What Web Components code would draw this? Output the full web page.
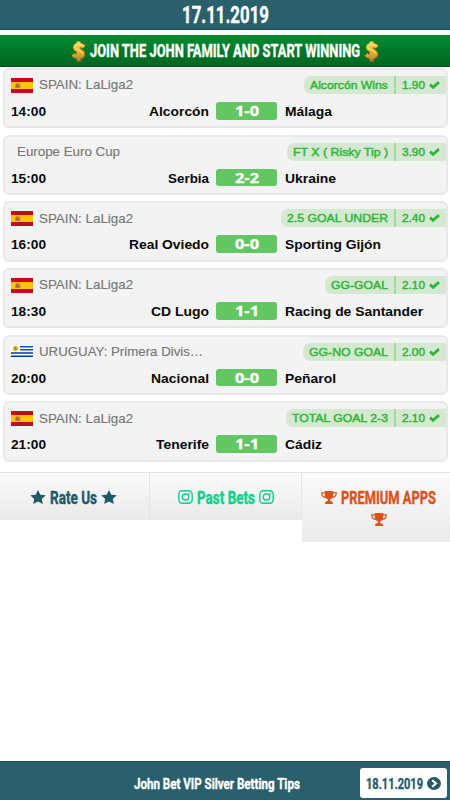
<!DOCTYPE html>
<html lang="en">
<head>
<meta charset="utf-8">
<meta name="viewport" content="width=device-width, initial-scale=1">
<title>John Bet VIP Silver Betting Tips</title>
<style>
    html, body {
        margin: 0;
        height: 100%;
        overflow: hidden;
        background: #fff;
    }
</style>
</head>
<body>
<betting-app></betting-app>
<script>
// Line of text squeezed or stretched to a width; its box is as tall as the capitals
class FitText extends HTMLElement {
    constructor() {
        super();
        this.attachShadow({ mode: 'open' });
    }

    connectedCallback() {
        const width = this.getAttribute('width');
        const cap = this.getAttribute('cap');
        this.shadowRoot.innerHTML = `
            <style>
                :host { display: block; flex: none; }
                svg { display: block; overflow: visible; }
                text { fill: currentColor; stroke: currentColor; stroke-width: var(--stroke, 0); }
            </style>
            <svg width="${width}" height="${cap}">
                <text x="0" y="${cap}" font-size="${cap / 0.716}">${this.textContent}</text>
            </svg>
        `;
        const text = this.shadowRoot.querySelector('text');
        const natural = text.getComputedTextLength();
        if (natural) text.setAttribute('transform', `scale(${width / natural} 1)`);
    }
}

const ICONS = {
    star: ['0 0 16 14', '<path fill="currentColor" d="M8 0l2.300 4.700 5.500.6-4 3.600 1 5.100L8 11.500 3.200 14l1-5.100-4-3.600 5.500-.6z"/>'],
    instagram: ['0 0 15 14', '<g fill="none" stroke="currentColor" stroke-width="1.4"><rect x=".8" y=".8" width="13.4" height="12.4" rx="3.6"/><ellipse cx="7.5" cy="7" rx="3.3" ry="3"/></g><circle cx="11.4" cy="3.6" r=".9" fill="currentColor"/>'],
    trophy: ['0 0 16 13', '<path fill="currentColor" d="M3.700 0h8.600v3.500c0 2.500-1.300 4.300-3.300 5 0 1.300.4 1.800 1.800 2 .9.200 1.200.8 1.200 2.500H4c0-1.700.3-2.300 1.200-2.500 1.400-.2 1.800-.7 1.800-2-2-.7-3.300-2.500-3.300-5z"/><path fill="none" stroke="currentColor" stroke-width="1.200" d="M4 1.900H.7c0 2.500 1.600 4.300 4.600 4.500M12 1.900h3.300c0 2.500-1.600 4.300-4.600 4.500"/>'],
    check: ['0 0 11 8', '<path fill="none" stroke="currentColor" stroke-width="2.8" d="M1 3.600l3.100 2.700L10 1.100"/>'],
    next: ['0 0 14 13', '<ellipse cx="7" cy="6.5" rx="7" ry="6.5" fill="currentColor"/><path fill="none" stroke="#fff" stroke-width="2.2" d="M5.200 3.200l3.700 3.300-3.700 3.300"/>'],
    spain: ['0 0 22 15', '<path fill="#c60b1e" d="M0 0h22v15H0z"/><path fill="#ffc400" d="M0 4h22v7H0z"/><path fill="#c98a2c" d="M4.500 6l1-.8h2l1.500.8.8 3-1 1h-4l-1-1z"/><path fill="#a34a2c" d="M5.500 6.500H8v2.700H5.500z"/><path fill="#d9b08a" d="M6.500 7h1v1h-1z"/>'],
    uruguay: ['0 0 22 13', '<path fill="#fff" d="M0 0h22v13H0z"/><path fill="#1450b4" d="M9 1h13v1.600H9zM9 4h13v1.600H9z"/><path fill="#0038a8" d="M0 7.200h22v1.600H0zM0 10.400h22V12H0z"/><circle cx="4.500" cy="3.500" r="2.800" fill="#ebc13c"/><circle cx="4.500" cy="3.500" r="1.500" fill="#a8852a"/>']
};

class UiIcon extends HTMLElement {
    constructor() {
        super();
        this.attachShadow({ mode: 'open' });
    }

    connectedCallback() {
        const [viewBox, shape] = ICONS[this.getAttribute('name')];
        const [, , width, height] = viewBox.split(' ');
        this.shadowRoot.innerHTML = `
            <style>
                :host { display: block; flex: none; }
                svg { display: block; }
            </style>
            <svg width="${width}" height="${height}" viewBox="${viewBox}">${shape}</svg>
        `;
    }
}

class DollarSign extends HTMLElement {
    constructor() {
        super();
        this.attachShadow({ mode: 'open' });
        this.shadowRoot.innerHTML = `
            <style>
                :host { display: block; flex: none; padding-top: 2px; }
                svg { display: block; }
            </style>
            <svg width="15" height="23" viewBox="0 0 15 23">
                <defs>
                    <linearGradient id="gold" x1="0" y1="0" x2="0" y2="1">
                        <stop offset="0" stop-color="#f8d65a"/>
                        <stop offset=".6" stop-color="#e6b02b"/>
                        <stop offset="1" stop-color="#a8873a"/>
                    </linearGradient>
                </defs>
                <g fill="none">
                    <path stroke="#8a6418" stroke-width="4.600" d="M13.300 7.500C11 4.500 5 4.500 4.700 7.800c-.2 3.700 7.600 2.700 7.600 6.500 0 3.700-7 3.700-9.800.7M8 2.500v19.500"/>
                    <path stroke="url(#gold)" stroke-width="3.800" d="M12.800 7C10.500 4 4.300 4 4 7.300c-.2 3.700 7.600 2.700 7.600 6.500 0 3.700-7 3.700-9.800.7M7.500 1.500V20.500"/>
                    <path stroke="#ffeb9c" stroke-width="1" d="M11 5.500C7.500 4 4 4.500 3.800 7c-.1 3 7.500 3 7.500 6.500"/>
                </g>
            </svg>
        `;
    }
}

class MatchCard extends HTMLElement {
    constructor() {
        super();
        this.attachShadow({ mode: 'open' });
    }

    connectedCallback() {
        const m = this.match;
        this.shadowRoot.innerHTML = `
            <style>
                :host {
                    display: block;
                    box-sizing: border-box;
                    height: 60.2px;
                    border: 2px solid #e8e8ea;
                    border-radius: 6px;
                    background: #f3f3f3;
                    font-family: "Liberation Sans", Arial, sans-serif;
                    font-weight: normal;
                }
                .row {
                    display: flex;
                    align-items: center;
                }
                .top {
                    height: 18px;
                    padding: 6px 0 0 6px;
                    justify-content: space-between;
                }
                .league {
                    display: flex;
                    align-items: center;
                    gap: 6px;
                    color: #777;
                    --stroke: .15px;
                }
                .tip {
                    display: flex;
                    align-items: center;
                    box-sizing: border-box;
                    height: 18px;
                    padding: 0 6px;
                    border-radius: 7px 0 0 7px;
                    background: #d5e8d1;
                    color: #2eb636;
                    --stroke: .45px;
                }
                .odds {
                    display: flex;
                    align-items: center;
                    gap: 4px;
                    height: 18px;
                    margin-left: 6px;
                    padding-left: 6px;
                    border-left: 2px solid #9edb9c;
                }
                .game {
                    height: 17px;
                    margin-top: 8.3px;
                    padding-left: 6px;
                    font-weight: bold;
                    color: #080808;
                    --stroke: 0;
                }
                .home {
                    display: flex;
                    flex: 1;
                    justify-content: flex-end;
                }
                .score {
                    display: flex;
                    justify-content: center;
                    align-items: center;
                    width: 61px;
                    height: 17.5px;
                    margin: 0 8px 0 7px;
                    border-radius: 3px;
                    background: #62c662;
                    color: #fff;
                    font-family: "Open Sans", sans-serif;
                    --stroke: .3px;
                }
                .away { width: 161px; }
            </style>
            <div class="row top">
                <div class="league">
                    ${m.flag ? `<ui-icon name="${m.flag}"></ui-icon>` : '<span></span>'}
                    <fit-text cap="9.3" width="${m.league[1]}">${m.league[0]}</fit-text>
                </div>
                <div class="tip">
                    <fit-text cap="8.3" width="${m.tip[1]}">${m.tip[0]}</fit-text>
                    <div class="odds">
                        <fit-text cap="8.3" width="23">${m.odds}</fit-text>
                        <ui-icon name="check"></ui-icon>
                    </div>
                </div>
            </div>
            <div class="row game">
                <fit-text cap="9.6" width="35">${m.time}</fit-text>
                <div class="home"><fit-text cap="9.6" width="${m.home[1]}">${m.home[0]}</fit-text></div>
                <div class="score"><fit-text cap="9.6" width="24">${m.score}</fit-text></div>
                <div class="away"><fit-text cap="9.6" width="${m.away[1]}">${m.away[0]}</fit-text></div>
            </div>
        `;
    }
}

class NavTab extends HTMLElement {
    constructor() {
        super();
        this.attachShadow({ mode: 'open' });
    }

    connectedCallback() {
        const icon = this.getAttribute('icon');
        this.shadowRoot.innerHTML = `
            <style>
                :host {
                    display: flex;
                    flex-wrap: wrap;
                    justify-content: center;
                    align-items: center;
                    align-content: flex-start;
                    gap: 9px 4px;
                    box-sizing: border-box;
                    padding: 17.5px 6px 13px;
                    border-top: 1px solid #e2e2e4;
                    background: linear-gradient(#fbfbfb, #eaeaea);
                }
            </style>
            <ui-icon name="${icon}"></ui-icon>
            <slot></slot>
            <ui-icon name="${icon}"></ui-icon>
        `;
    }
}

class BettingApp extends HTMLElement {
    constructor() {
        super();
        this.matches = [
            { flag: 'spain', league: ['SPAIN: LaLiga2', 94], tip: ['Alcorcón Wins', 78], odds: '1.90', time: '14:00', home: ['Alcorcón', 60], score: '1-0', away: ['Málaga', 47] },
            { flag: '', league: ['Europe Euro Cup', 103], tip: ['FT X ( Risky Tip )', 95], odds: '3.90', time: '15:00', home: ['Serbia', 41], score: '2-2', away: ['Ukraine', 51] },
            { flag: 'spain', league: ['SPAIN: LaLiga2', 94], tip: ['2.5 GOAL UNDER', 101], odds: '2.40', time: '16:00', home: ['Real Oviedo', 80], score: '0-0', away: ['Sporting Gijón', 96] },
            { flag: 'spain', league: ['SPAIN: LaLiga2', 94], tip: ['GG-GOAL', 57], odds: '2.10', time: '18:30', home: ['CD Lugo', 58], score: '1-1', away: ['Racing de Santander', 138] },
            { flag: 'uruguay', league: ['URUGUAY: Primera Divis…', 164], tip: ['GG-NO GOAL', 79], odds: '2.00', time: '20:00', home: ['Nacional', 58], score: '0-0', away: ['Peñarol', 51] },
            { flag: 'spain', league: ['SPAIN: LaLiga2', 94], tip: ['TOTAL GOAL 2-3', 96], odds: '2.10', time: '21:00', home: ['Tenerife', 53], score: '1-1', away: ['Cádiz', 37] }
        ];
        this.attachShadow({ mode: 'open' });
    }

    connectedCallback() {
        this.render();
    }

    render() {
        this.shadowRoot.innerHTML = `
            <style>
                :host {
                    display: flex;
                    flex-direction: column;
                    height: 100vh;
                    font-family: Roboto, sans-serif;
                    font-weight: bold;
                    --stroke: .4px;
                }
                header {
                    display: flex;
                    justify-content: center;
                    box-sizing: border-box;
                    height: 30px;
                    padding-top: 6px;
                    border-bottom: 1px solid #124c58;
                    background: #29606c;
                    color: #fff;
                }
                .banner {
                    display: flex;
                    justify-content: center;
                    align-items: center;
                    gap: 4px;
                    box-sizing: border-box;
                    height: 32px;
                    margin-top: 5px;
                    border-bottom: 1px solid #00541a;
                    background: linear-gradient(#008c30, #006521);
                    color: #fff;
                }
                .list {
                    display: flex;
                    flex-direction: column;
                    gap: 6.5px;
                    padding: 1px 2px 0 3px;
                }
                nav {
                    display: flex;
                    align-items: flex-start;
                    margin-top: 10px;
                }
                .rate { width: 150px; height: 48px; padding-right: 8px; border-right: 1px solid #e4e4e8; color: #1f5b66; }
                .past { width: 152px; height: 48px; border-right: 1px solid #e4e4e8; color: #10ce8d; }
                .premium { width: 148px; height: 70px; padding: 18px 12px 13px 17px; color: #d9531e; }
                footer {
                    display: flex;
                    justify-content: space-between;
                    align-items: center;
                    box-sizing: border-box;
                    height: 39px;
                    margin-top: auto;
                    padding: 4px 3px 0 134px;
                    border-top: 1px solid #124c58;
                    background: #29606c;
                    color: #fff;
                }
                .date {
                    display: flex;
                    justify-content: center;
                    align-items: center;
                    gap: 4px;
                    width: 87px;
                    height: 30px;
                    border-radius: 3px;
                    background: #fff;
                    color: #255b66;
                }
            </style>
            <header><fit-text cap="16.8" width="87">17.11.2019</fit-text></header>
            <div class="banner">
                <dollar-sign></dollar-sign>
                <fit-text cap="12.5" width="270">JOIN THE JOHN FAMILY AND START WINNING</fit-text>
                <dollar-sign></dollar-sign>
            </div>
            <div class="list"></div>
            <nav>
                <nav-tab class="rate" icon="star"><fit-text cap="12.5" width="47">Rate Us</fit-text></nav-tab>
                <nav-tab class="past" icon="instagram"><fit-text cap="12.5" width="58">Past Bets</fit-text></nav-tab>
                <nav-tab class="premium" icon="trophy"><fit-text cap="12.5" width="95">PREMIUM APPS</fit-text></nav-tab>
            </nav>
            <footer>
                <fit-text cap="11" width="166">John Bet VIP Silver Betting Tips</fit-text>
                <div class="date">
                    <fit-text cap="10.8" width="57">18.11.2019</fit-text>
                    <ui-icon name="next"></ui-icon>
                </div>
            </footer>
        `;
        const list = this.shadowRoot.querySelector('.list');
        this.matches.forEach((match) => {
            const card = document.createElement('match-card');
            card.match = match;
            list.append(card);
        });
    }
}

customElements.define('fit-text', FitText);
customElements.define('ui-icon', UiIcon);
customElements.define('dollar-sign', DollarSign);
customElements.define('match-card', MatchCard);
customElements.define('nav-tab', NavTab);
customElements.define('betting-app', BettingApp);
</script>
</body>
</html>
